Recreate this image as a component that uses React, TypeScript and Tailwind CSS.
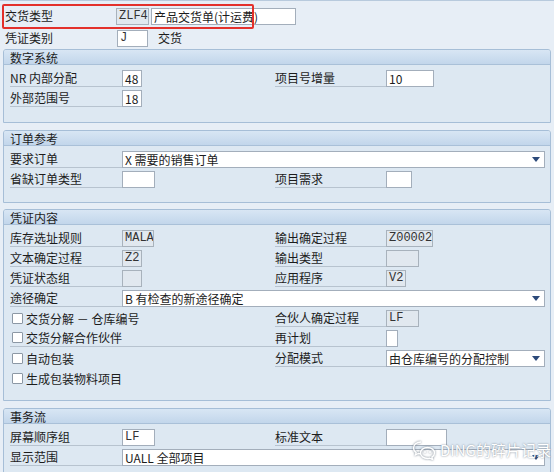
import React from "react";

const Lbl = ({ t, w = "w-[112px]" }: { t: string; w?: string }) => (
  <div className={`${w} h-[18px] shrink-0 border-b border-[#b7c3cf] text-[12px] leading-[17px] text-[#1c1c1c] whitespace-nowrap`}>
    {t}
  </div>
);

const Field = ({ v = "", w, ro = false, mono = false }: { v?: string; w: string; ro?: boolean; mono?: boolean }) => (
  <div
    className={`${w} h-[17px] shrink-0 border px-[2px] text-[12px] leading-[15px] whitespace-nowrap overflow-hidden ${
      ro ? "bg-[#e1e8ef] border-[#a8b2bc]" : "bg-white border-[#a3aebb]"
    } ${mono ? "font-['Liberation_Mono',monospace] text-[#333]" : "text-[#1c1c1c]"}`}
  >
    {v}
  </div>
);

const Drop = ({ v, w }: { v: string; w: string }) => (
  <div className={`${w} h-[17px] shrink-0 flex items-center justify-between bg-white border border-[#a3aebb] pl-[2px] pr-[4px] text-[12px] leading-[15px] text-[#1c1c1c]`}>
    <span className="whitespace-nowrap">{v}</span>
    <svg width="8" height="5" viewBox="0 0 8 5">
      <path d="M0 0h8L4 5z" fill="#2c4a7a" />
    </svg>
  </div>
);

const Check = ({ t, line = false }: { t: string; line?: boolean }) => (
  <div className={`flex w-[265px] h-[18px] items-center ${line ? "border-b border-[#b7c3cf]" : ""}`}>
    <div className="w-[11px] h-[11px] ml-[2px] mr-[3px] bg-white border border-[#8c98a5] rounded-[1px]" />
    <span className="text-[12px] leading-[15px] text-[#1c1c1c] whitespace-nowrap">{t}</span>
  </div>
);

const Row = ({ children }: { children: React.ReactNode }) => (
  <div className="flex h-[20px] items-center pl-[6px]">{children}</div>
);

const Left = ({ children }: { children: React.ReactNode }) => (
  <div className="flex w-[265px] shrink-0 items-center">{children}</div>
);

const Panel = ({ title, children, pb }: { title: string; children: React.ReactNode; pb: string }) => (
  <div className="mx-[3px] border border-[#a6bed7] rounded-t-[3px] bg-[#dde8f2] overflow-hidden">
    <div className="h-[15px] bg-gradient-to-b from-[#d8e6f4] to-[#c2d6eb] border-b border-[#a9c0d8] pl-[6px] text-[12px] leading-[15px] text-[#1c1c1c]">
      {title}
    </div>
    <div className={`pt-[3px] ${pb}`}>{children}</div>
  </div>
);

export default function App() {
  return (
    <div className="relative w-[554px] h-[472px] overflow-hidden bg-[#e7eef6] border-t border-[#b8cadd] font-['Noto_Sans_CJK_SC',sans-serif]">
      {/* header fields */}
      <div className="pt-[5px] pl-[5px]">
        <div className="flex h-[20px] items-center">
          <div className="w-[111px] text-[12px] text-[#1c1c1c]">交货类型</div>
          <Field v="ZLF4" w="w-[33px]" ro mono />
          <div className="w-[2px]" />
          <Field v="产品交货单(计运费)" w="w-[145px]" />
        </div>
        <div className="flex h-[20px] items-center mt-[2px] mb-[1px]">
          <div className="w-[112px] text-[12px] text-[#1c1c1c]">凭证类别</div>
          <Field v="J" w="w-[31px]" mono />
          <span className="ml-[10px] text-[12px] text-[#1c1c1c]">交货</span>
        </div>
      </div>

      <Panel title="数字系统" pb="pb-[14px]">
        <Row>
          <Left>
            <Lbl t="NR 内部分配" />
            <Field v="48" w="w-[20px]" />
          </Left>
          <Lbl t="项目号增量" w="w-[111px]" />
          <Field v="10" w="w-[48px]" />
        </Row>
        <Row>
          <Left>
            <Lbl t="外部范围号" />
            <Field v="18" w="w-[20px]" />
          </Left>
        </Row>
      </Panel>

      <div className="h-[7px]" />

      <Panel title="订单参考" pb="pb-[13px]">
        <Row>
          <Lbl t="要求订单" />
          <Drop v="X 需要的销售订单" w="w-[423px]" />
        </Row>
        <Row>
          <Left>
            <Lbl t="省缺订单类型" />
            <Field w="w-[33px]" />
          </Left>
          <Lbl t="项目需求" w="w-[111px]" />
          <Field w="w-[26px]" />
        </Row>
      </Panel>

      <div className="h-[6px]" />

      <Panel title="凭证内容" pb="pb-[12px]">
        <Row>
          <Left>
            <Lbl t="库存选址规则" />
            <Field v="MALA" w="w-[32px]" ro mono />
          </Left>
          <Lbl t="输出确定过程" w="w-[111px]" />
          <Field v="Z00002" w="w-[47px]" ro mono />
        </Row>
        <Row>
          <Left>
            <Lbl t="文本确定过程" />
            <Field v="Z2" w="w-[20px]" ro mono />
          </Left>
          <Lbl t="输出类型" w="w-[111px]" />
          <Field w="w-[33px]" ro />
        </Row>
        <Row>
          <Left>
            <Lbl t="凭证状态组" />
            <Field w="w-[20px]" ro />
          </Left>
          <Lbl t="应用程序" w="w-[111px]" />
          <Field v="V2" w="w-[20px]" ro mono />
        </Row>
        <Row>
          <Lbl t="途径确定" />
          <Drop v="B 有检查的新途径确定" w="w-[423px]" />
        </Row>
        <Row>
          <Left>
            <Check t="交货分解 － 仓库编号" />
          </Left>
          <Lbl t="合伙人确定过程" w="w-[111px]" />
          <Field v="LF" w="w-[33px]" ro mono />
        </Row>
        <Row>
          <Left>
            <Check t="交货分解合作伙伴" line />
          </Left>
          <Lbl t="再计划" w="w-[111px]" />
          <Field w="w-[12px]" />
        </Row>
        <Row>
          <Left>
            <Check t="自动包装" />
          </Left>
          <Lbl t="分配模式" w="w-[111px]" />
          <Drop v="由仓库编号的分配控制" w="w-[159px]" />
        </Row>
        <Row>
          <Left>
            <Check t="生成包装物料项目" />
          </Left>
        </Row>
      </Panel>

      <div className="h-[7px]" />

      <Panel title="事务流" pb="pb-[6px]">
        <Row>
          <Left>
            <Lbl t="屏幕顺序组" />
            <Field v="LF" w="w-[33px]" mono />
          </Left>
          <Lbl t="标准文本" w="w-[111px]" />
          <Field w="w-[61px]" />
        </Row>
        <Row>
          <Lbl t="显示范围" />
          <Drop v="UALL 全部项目" w="w-[423px]" />
        </Row>
      </Panel>

      {/* annotation */}
      <div className="absolute left-[2px] top-[3px] w-[252px] h-[25px] border-2 border-[#e3302b] rounded-[2px]" />

      {/* watermark */}
      <div className="absolute left-[412px] top-[439px] flex items-center gap-[4px] text-white [text-shadow:0_0_2px_#6b7785]">
        <svg width="24" height="20" viewBox="0 0 24 20" className="drop-shadow-[0_0_1px_#6b7785]">
          <path d="M9 2C4.6 2 1.5 4.7 1.5 8c0 1.9 1 3.5 2.6 4.6L3.5 15l2.8-1.5c.9.3 1.8.4 2.7.4" fill="none" stroke="white" strokeWidth="1.4" />
          <path d="M15.5 7.5c-4 0-7 2.5-7 5.5s3 5.5 7 5.5c.8 0 1.6-.1 2.3-.3L20.5 19.5l-.6-2.4c1.6-1 2.6-2.5 2.6-4.1 0-3-3-5.5-7-5.5z" fill="none" stroke="white" strokeWidth="1.4" />
          <circle cx="13" cy="12" r="1" fill="white" />
          <circle cx="18" cy="12" r="1" fill="white" />
        </svg>
        <span className="text-[15px] leading-[18px] whitespace-nowrap">DING的碎片记录</span>
      </div>
    </div>
  );
}
